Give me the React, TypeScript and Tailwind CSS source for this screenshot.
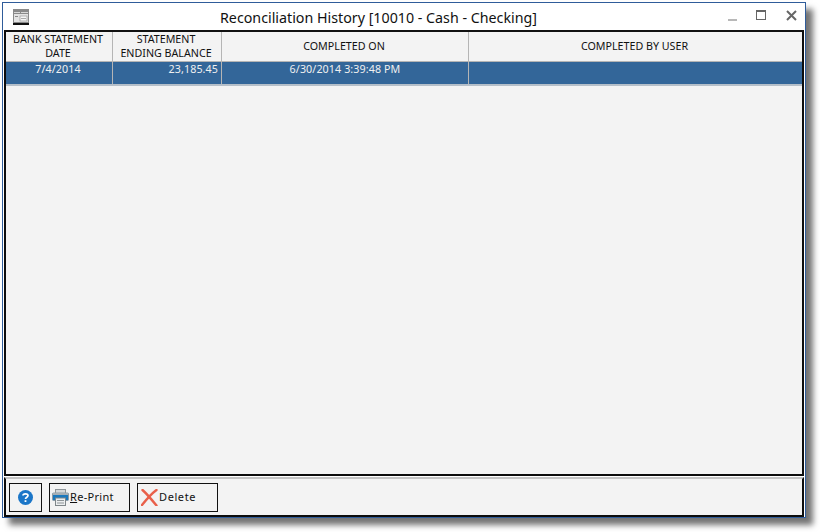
const font = { fontFamily: '"Noto Sans", Tahoma, sans-serif' }

function WindowIcon() {
  return (
    <svg width="16" height="16" viewBox="0 0 16 16" className="block">
      <rect x="0" y="0" width="16" height="15" fill="#8a8a8a" />
      <rect x="0" y="14" width="16" height="2" fill="#111" />
      <rect x="1" y="3" width="6" height="1" fill="#d8d8d8" />
      <rect x="8" y="3" width="7" height="1" fill="#d8d8d8" />
      <rect x="1" y="5" width="14" height="8" fill="#e4e4e4" />
      <rect x="7" y="7" width="7" height="5" fill="#f6f6f6" stroke="#8a8a8a" strokeWidth="0.6" />
      <rect x="2" y="7" width="3" height="1" fill="#8a8a8a" />
      <rect x="8" y="9" width="5" height="0.7" fill="#8a8a8a" />
    </svg>
  )
}

function PrinterIcon() {
  return (
    <svg width="17" height="17" viewBox="0 0 17 17" className="block">
      <rect x="3.5" y="0.5" width="10" height="4" fill="#d5d8da" stroke="#8d9498" />
      <rect x="0.5" y="4" width="16" height="7.5" rx="1" fill="#1b78bd" stroke="#8b9aa5" />
      <rect x="1" y="4" width="15" height="2" fill="#a6afb5" />
      <rect x="3.5" y="9" width="10" height="7.5" fill="#eceeef" stroke="#7f8689" />
      <rect x="5" y="11" width="7" height="1" fill="#8d9498" />
      <rect x="5" y="13.5" width="7" height="1" fill="#8d9498" />
    </svg>
  )
}

function DeleteIcon() {
  return (
    <svg width="17" height="17" viewBox="0 0 17 17" className="block">
      <path d="M1.5 1 C6 5 11 11 15.5 16.5" stroke="#e9604a" strokeWidth="2.4" fill="none" strokeLinecap="round" />
      <path d="M15.5 1 C10 5 5 11 1 16" stroke="#e9604a" strokeWidth="2.4" fill="none" strokeLinecap="round" />
    </svg>
  )
}

function HelpIcon() {
  return (
    <svg width="15" height="15" viewBox="0 0 15 15" className="block">
      <circle cx="7.5" cy="7.5" r="7.5" fill="#1b76c8" />
      <path d="M5 5.6 C5 3.2 10 3.2 10 5.6 C10 7.2 7.5 7.2 7.5 9" stroke="#fff" strokeWidth="1.7" fill="none" />
      <rect x="6.6" y="10.2" width="1.8" height="1.8" fill="#fff" />
    </svg>
  )
}

export default function App() {
  return (
    <div className="w-[820px] h-[532px] bg-white pl-[2px] pt-[2px] overflow-hidden" style={font}>
      <div className="w-[804px] h-[516px] flex flex-col bg-white border border-[#2f5c9a] shadow-[7px_7px_6px_rgba(0,0,0,0.55)]">
        {/* title bar */}
        <div className="h-[27px] shrink-0 flex items-center relative">
          <div className="ml-[10px]">
            <WindowIcon />
          </div>
          <div className="flex-1 text-center text-[14.25px] text-[#111] pt-[2px]">
            Reconciliation History [10010 - Cash - Checking]
          </div>
          <div className="flex items-center mr-[6px]">
            <div className="w-[9px] h-[2px] bg-[#b8b8b8] mr-[19px] mt-[6px]" />
            <div className="w-[10px] h-[10px] border border-[#666] border-t-[2px] mr-[20px] mt-[-3px]" />
            <svg width="11" height="11" viewBox="0 0 11 11" className="mr-[2px] mt-[-2px]">
              <path d="M1 1 L10 10 M10 1 L1 10" stroke="#666" strokeWidth="2" />
            </svg>
          </div>
        </div>

        {/* grid */}
        <div className="mx-[1px] h-[446px] shrink-0 border-2 border-[#0c0c0c] border-t-[#111] bg-[#f3f3f3] text-[10.7px] text-[#111] flex flex-col">
          <div className="h-[30px] shrink-0 flex border-b border-[#b5b5b5] leading-[14px] text-center">
            <div className="w-[107px] shrink-0 border-r border-[#b5b5b5] pr-[2px]">
              BANK STATEMENT
              <br />
              DATE
            </div>
            <div className="w-[109px] shrink-0 border-r border-[#b5b5b5] pr-[2px]">
              STATEMENT
              <br />
              ENDING BALANCE
            </div>
            <div className="w-[247px] shrink-0 border-r border-[#b5b5b5] pt-[7px] pr-[2px]">COMPLETED ON</div>
            <div className="flex-1 pt-[7px] pr-[2px]">COMPLETED BY USER</div>
          </div>
          <div className="h-[24px] shrink-0 flex bg-[#336699] border-b-2 border-[#b5bfc9] text-[#f0f0f0] leading-[14px] tracking-[0.1px]">
            <div className="w-[107px] shrink-0 border-r border-[#b5b5b5] text-center pr-[2px]">7/4/2014</div>
            <div className="w-[109px] shrink-0 border-r border-[#b5b5b5] text-right pr-[3px]">23,185.45</div>
            <div className="w-[247px] shrink-0 border-r border-[#b5b5b5] text-center">6/30/2014 3:39:48 PM</div>
            <div className="flex-1" />
          </div>
        </div>

        {/* footer */}
        <div className="mx-[1px] flex-1 min-h-0 mt-[1px] border-t-2 border-t-[#c4c4c4] border-x-2 border-x-[#0c0c0c] border-b-2 border-b-[#0c0c0c] bg-[#f3f3f3] flex items-start gap-[7px] pl-[3px] pt-[4px] text-[11px] text-[#111]">
          <button className="w-[33px] h-[29px] border border-[#111] flex items-center justify-center">
            <HelpIcon />
          </button>
          <button className="w-[81px] h-[29px] border border-[#111] flex items-center pl-[2px] gap-[1px] tracking-[0.3px]">
            <PrinterIcon />
            <span>
              <span className="underline">R</span>e-Print
            </span>
          </button>
          <button className="w-[81px] h-[29px] border border-[#111] flex items-center pl-[3px] gap-[1px] tracking-[0.6px]">
            <DeleteIcon />
            <span>Delete</span>
          </button>
        </div>
      </div>
    </div>
  )
}
